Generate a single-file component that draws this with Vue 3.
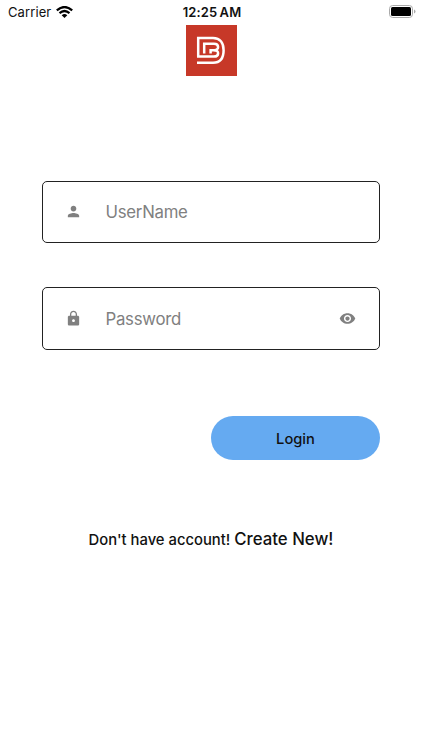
<script setup>
import { ref } from 'vue'

const username = ref('')
const password = ref('')
const showPassword = ref(false)

const togglePassword = () => {
  showPassword.value = !showPassword.value
}
</script>

<template>
  <div class="screen">
    <header class="status-bar">
      <div class="carrier">
        <span>Carrier</span>
        <svg class="wifi" viewBox="0 0 17 12">
          <path d="M0.8 4.4 Q8.5 -2.4 16.2 4.4" />
          <path d="M3.5 7.2 Q8.5 2.8 13.5 7.2" />
          <path class="dot" d="M5.7 9.2 Q8.5 6.8 11.3 9.2 L8.5 12 Z" />
        </svg>
      </div>
      <span class="time">12:25 AM</span>
      <svg class="battery" viewBox="0 0 27 13">
        <rect class="shell" x="0.5" y="0.5" width="23" height="12" rx="3.2" />
        <rect x="2" y="2" width="20" height="9" rx="1.5" />
        <path class="cap" d="M25 4.5 Q26.5 5 26.5 6.5 Q26.5 8 25 8.5 Z" />
      </svg>
    </header>

    <svg class="logo" viewBox="0 0 51 51">
      <rect width="51" height="51" fill="#c73828" />
      <path d="M11 31.6 H28 C33.4 31.6 33.4 25.2 28.4 25.2 H24.6 V28.4" />
      <path d="M12.2 31.6 V13 H27 C34.5 13 37.6 18.5 37.6 25.2 C37.6 32.5 34.5 37.7 27 37.7 H11" />
      <path d="M18.2 28.4 V18.8 H28 C33.4 18.8 33.4 25.2 28.4 25.2" />
    </svg>

    <form class="login-form" @submit.prevent>
      <label class="field">
        <svg class="icon" viewBox="0 0 24 24">
          <path
            d="M12 12c2.21 0 4-1.79 4-4s-1.79-4-4-4-4 1.79-4 4 1.79 4 4 4zm0 2c-2.67 0-8 1.34-8 4v2h16v-2c0-2.66-5.33-4-8-4z"
          />
        </svg>
        <input v-model="username" type="text" placeholder="UserName" />
      </label>
      <label class="field">
        <svg class="icon" viewBox="0 0 24 24">
          <path
            d="M18 8h-1V6c0-2.76-2.24-5-5-5S7 3.24 7 6v2H6c-1.1 0-2 .9-2 2v10c0 1.1.9 2 2 2h12c1.1 0 2-.9 2-2V10c0-1.1-.9-2-2-2zm-6 9c-1.1 0-2-.9-2-2s.9-2 2-2 2 .9 2 2-.9 2-2 2zm3.1-9H8.9V6c0-1.71 1.39-3.1 3.1-3.1 1.71 0 3.1 1.39 3.1 3.1v2z"
          />
        </svg>
        <input
          v-model="password"
          :type="showPassword ? 'text' : 'password'"
          placeholder="Password"
        />
        <svg class="icon eye" viewBox="0 0 24 24" @click.prevent="togglePassword">
          <path
            d="M12 4.5C7 4.5 2.73 7.61 1 12c1.73 4.39 6 7.5 11 7.5s9.27-3.11 11-7.5c-1.73-4.39-6-7.5-11-7.5zM12 17c-2.76 0-5-2.24-5-5s2.24-5 5-5 5 2.24 5 5-2.24 5-5 5zm0-8c-1.66 0-3 1.34-3 3s1.34 3 3 3 3-1.34 3-3-1.34-3-3-3z"
          />
        </svg>
      </label>
      <button class="login-button" type="submit">Login</button>
    </form>

    <p class="signup">
      <span>Don't have account!</span>
      <a class="create">Create New!</a>
    </p>
  </div>
</template>

<style>
body {
  background-color: #fff;
}
</style>

<style scoped>
.screen {
  display: flex;
  flex-direction: column;
  align-items: center;
  height: 750px;
  overflow: hidden;
  background-color: #fff;
  color: #111;
  font-family: Inter, sans-serif;
}

.status-bar {
  display: grid;
  grid-template-columns: 1fr auto 1fr;
  align-items: center;
  box-sizing: border-box;
  width: 100%;
  height: 25px;
  padding: 0 6px 2px 8px;
  font-size: 13px;
}

.carrier {
  display: flex;
  align-items: center;
  gap: 5px;
  letter-spacing: 0.1px;
}

.wifi {
  width: 17px;
  height: 12px;
  fill: none;
  stroke: #000;
  stroke-width: 2.2;
}

.wifi .dot {
  fill: #000;
  stroke: none;
}

.time {
  font-weight: 600;
  word-spacing: -1px;
  letter-spacing: 0.1px;
}

.battery {
  justify-self: end;
  width: 27px;
  height: 13px;
}

.battery .shell {
  fill: none;
  stroke: #aaa;
}

.battery .cap {
  fill: #aaa;
}

.logo {
  width: 51px;
  height: 51px;
  fill: none;
  stroke: #fff;
  stroke-width: 2.5;
}

.logo rect {
  stroke: none;
}

.login-form {
  display: flex;
  flex-direction: column;
  width: 338px;
  margin-top: 104.6px;
}

.field {
  display: flex;
  align-items: center;
  box-sizing: border-box;
  height: 62.6px;
  margin-bottom: 44px;
  padding: 0 23px 0 22px;
  border: 1px solid #222;
  border-radius: 5px;
}

.icon {
  flex: none;
  width: 17px;
  height: 17px;
  fill: #808080;
}

.field input {
  flex: 1;
  min-width: 0;
  margin-left: 23.5px;
  padding: 1px 0 0;
  border: none;
  outline: none;
  background: transparent;
  font-family: inherit;
  font-size: 16.8px;
  letter-spacing: -0.27px;
}

.field input::placeholder {
  color: #808080;
  opacity: 1;
}

.login-button {
  align-self: flex-end;
  width: 169px;
  height: 44px;
  margin-top: 22.6px;
  padding: 2px 0 0;
  border: none;
  border-radius: 22px;
  background-color: #65aaf1;
  color: #111;
  font-family: inherit;
  font-size: 14.7px;
  font-weight: 500;
}

.signup {
  display: flex;
  align-items: baseline;
  gap: 4px;
  margin: 68.6px 0 0;
  font-size: 14.8px;
  font-weight: 500;
  white-space: nowrap;
}

.create {
  font-size: 16.8px;
}
</style>
